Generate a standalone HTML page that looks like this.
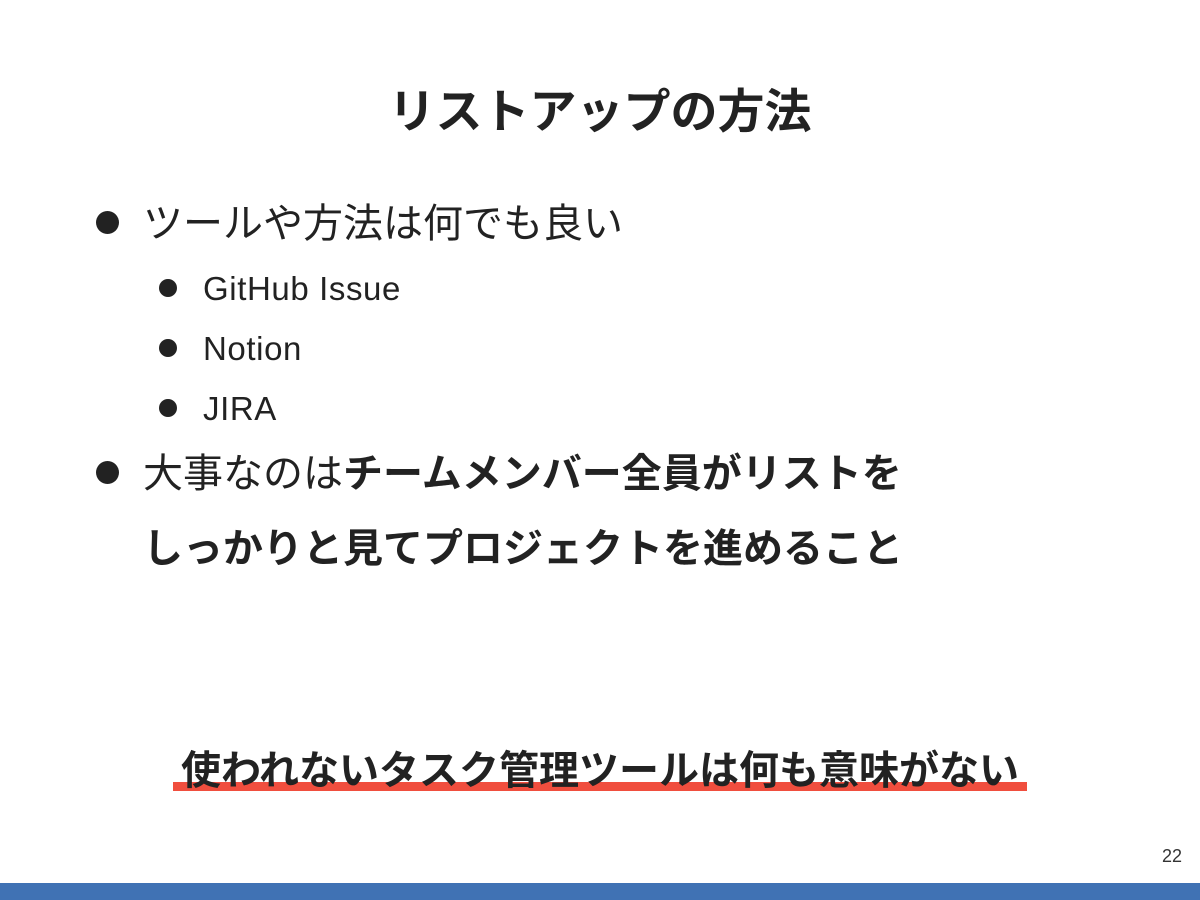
<!DOCTYPE html>
<html><head><meta charset="utf-8"><style>
html,body{margin:0;padding:0;}
body{width:1200px;height:900px;position:relative;background:#fff;color:#222;font-family:"Liberation Sans","Noto Sans CJK JP",sans-serif;overflow:hidden;}
.a{position:absolute;white-space:nowrap;}
.t{left:0;width:1200px;text-align:center;top:82px;font-size:47px;font-weight:bold;line-height:60px;}
.l{font-size:40px;line-height:50px;left:143px;}
.s{font-size:33px;line-height:40px;left:203px;letter-spacing:0.6px;}
.d{position:absolute;border-radius:50%;background:#222;}
.b{left:0;width:1200px;text-align:center;top:746px;font-size:40px;font-weight:bold;line-height:50px;}
</style></head><body>
<div class="a t">リストアップの方法</div>
<div class="d" style="left:96px;top:211px;width:23px;height:23px"></div>
<div class="a l" style="top:199px">ツールや方法は何でも良い</div>
<div class="d" style="left:159px;top:279px;width:18px;height:18px"></div>
<div class="a s" style="top:269px">GitHub Issue</div>
<div class="d" style="left:159px;top:339px;width:18px;height:18px"></div>
<div class="a s" style="top:329px">Notion</div>
<div class="d" style="left:159px;top:399px;width:18px;height:18px"></div>
<div class="a s" style="top:389px">JIRA</div>
<div class="d" style="left:96px;top:461px;width:23px;height:23px"></div>
<div class="a l" style="top:449px">大事なのは<b>チームメンバー全員がリストを</b></div>
<div class="a l" style="top:524px"><b>しっかりと見てプロジェクトを進めること</b></div>
<div class="a" style="left:173px;top:782px;width:854px;height:9px;background:#f04e3e"></div>
<div class="a b">使われないタスク管理ツールは何も意味がない</div>
<div class="a" style="right:18px;top:846px;font-size:18px;color:#333">22</div>
<div class="a" style="left:0;top:883px;width:1200px;height:17px;background:#4072b4"></div>
</body></html>
